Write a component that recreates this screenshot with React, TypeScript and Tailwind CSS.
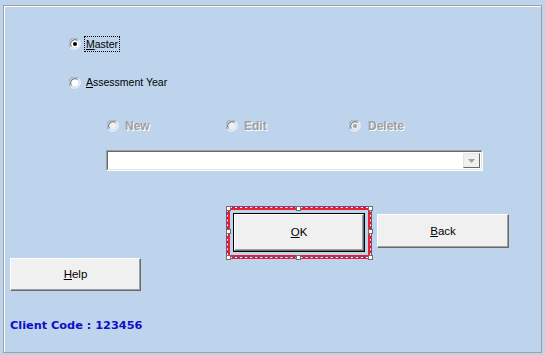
import React from "react";

const ui = { fontFamily: '"Liberation Sans", Arial, sans-serif' };

function Radio({ checked = false, disabled = false }: { checked?: boolean; disabled?: boolean }) {
  return (
    <svg width="12" height="12" viewBox="0 0 12 12" className="shrink-0">
      <path d="M1.5 9.5 A5.5 5.5 0 0 1 9.5 1.5" fill="none" stroke="#a0a0a0" strokeWidth="1" />
      <path d="M9.5 1.5 A5.5 5.5 0 0 1 1.5 9.5" fill="none" stroke="#ffffff" strokeWidth="1" />
      <path d="M2.5 8.5 A4.3 4.3 0 0 1 8.5 2.5" fill="none" stroke="#696969" strokeWidth="1" />
      <path d="M8.5 2.5 A4.3 4.3 0 0 1 2.5 8.5" fill="none" stroke="#e3e3e3" strokeWidth="1" />
      <circle cx="6" cy="6" r="3.6" fill={disabled ? "#f0f0f0" : "#ffffff"} />
      {checked && <circle cx="6" cy="6" r="2" fill={disabled ? "#a0a0a0" : "#000000"} />}
    </svg>
  );
}

function WinButton({ label, className = "" }: { label: React.ReactNode; className?: string }) {
  return (
    <div
      className={`flex items-center justify-center bg-[#f0f0f0] border-t border-l border-white border-b border-r border-b-[#696969] border-r-[#696969] shadow-[inset_-1px_-1px_0_#a0a0a0] text-[11.5px] text-black ${className}`}
      style={ui}
    >
      {label}
    </div>
  );
}

function Handle() {
  return <div className="w-[5px] h-[5px] bg-white border border-[#707070]" />;
}

export default function App() {
  return (
    <div className="w-[545px] h-[355px] bg-[#bed3ec] pt-[5px] pl-[3px] overflow-hidden">
      <div className="w-[539px] h-[348px] border border-[#a0a0a0] shadow-[inset_1px_1px_0_#ffffff] flex flex-col">
        {/* Master */}
        <div className="mt-[30px] ml-[65px] h-[16px] flex items-center gap-[3px] text-[10.5px] text-black" style={ui}>
          <Radio checked />
          <span className="border border-dotted border-black px-[1px] leading-[14px]">
            <span className="underline">M</span>aster
          </span>
        </div>

        {/* Assessment Year */}
        <div className="mt-[23px] ml-[65px] h-[16px] flex items-center gap-[4px] text-[10.5px] text-black" style={ui}>
          <Radio />
          <span className="px-[1px]">
            <span className="underline">A</span>ssessment Year
          </span>
        </div>

        {/* New / Edit / Delete */}
        <div
          className="mt-[27px] ml-[103px] h-[16px] flex items-center text-[12px] font-bold text-[#a0a0a0] [text-shadow:1px_1px_0_#ffffff]"
          style={ui}
        >
          <div className="w-[119px] flex items-center gap-[6px]">
            <Radio disabled />
            <span>New</span>
          </div>
          <div className="w-[123px] flex items-center gap-[6px]">
            <Radio disabled />
            <span>Edit</span>
          </div>
          <div className="flex items-center gap-[7px]">
            <Radio disabled checked />
            <span>Delete</span>
          </div>
        </div>

        {/* Combo */}
        <div className="mt-[16px] ml-[102px] w-[377px] h-[21px] border-t border-l border-[#a0a0a0] border-b border-r border-b-white border-r-white">
          <div className="w-full h-full bg-white border-t border-l border-[#696969] border-b border-r border-b-[#e3e3e3] border-r-[#e3e3e3] flex justify-end items-stretch p-px">
            <div className="w-[17px] bg-[#f0f0f0] border-t border-l border-[#e3e3e3] border-b border-r border-b-[#696969] border-r-[#696969] flex items-center justify-center">
              <svg width="7" height="4" viewBox="0 0 7 4">
                <path d="M0 0 H7 L3.5 4 Z" fill="#a0a0a0" />
              </svg>
            </div>
          </div>
        </div>

        {/* OK / Back */}
        <div className="mt-[35px] ml-[222px] flex items-start">
          <div className="relative w-[146px] h-[53px] border-[4px] border-[#e8222a]">
            <div className="absolute -inset-[3px] border border-white pointer-events-none" />
            <div className="absolute -inset-[3px] border border-dashed border-[#2855c8] pointer-events-none" />
            <div className="absolute inset-[3px] flex">
              <div className="w-full h-full border border-black">
                <WinButton
                  className="w-full h-full"
                  label={
                    <span>
                      <span className="underline">O</span>K
                    </span>
                  }
                />
              </div>
            </div>
            <div className="absolute -left-[4.5px] -top-[4.5px]"><Handle /></div>
            <div className="absolute left-[66px] -top-[4.5px]"><Handle /></div>
            <div className="absolute -right-[4.5px] -top-[4.5px]"><Handle /></div>
            <div className="absolute -left-[4.5px] top-[19px]"><Handle /></div>
            <div className="absolute -right-[4.5px] top-[19px]"><Handle /></div>
            <div className="absolute -left-[4.5px] -bottom-[4.5px]"><Handle /></div>
            <div className="absolute left-[66px] -bottom-[4.5px]"><Handle /></div>
            <div className="absolute -right-[4.5px] -bottom-[4.5px]"><Handle /></div>
          </div>
          <WinButton
            className="ml-[5px] mt-[8px] w-[132px] h-[34px] pt-[2px]"
            label={
              <span>
                <span className="underline">B</span>ack
              </span>
            }
          />
        </div>

        {/* Help */}
        <WinButton
          className="-mt-px ml-[6px] w-[131px] h-[33px] pt-px"
          label={
            <span>
              <span className="underline">H</span>elp
            </span>
          }
        />

        {/* Client code */}
        <div
          className="mt-[28px] ml-[6px] text-[11.3px] leading-[13px] font-bold text-[#0c10c4]"
          style={{ fontFamily: '"DejaVu Sans", Verdana, sans-serif' }}
        >
          Client Code : 123456
        </div>
      </div>
    </div>
  );
}
